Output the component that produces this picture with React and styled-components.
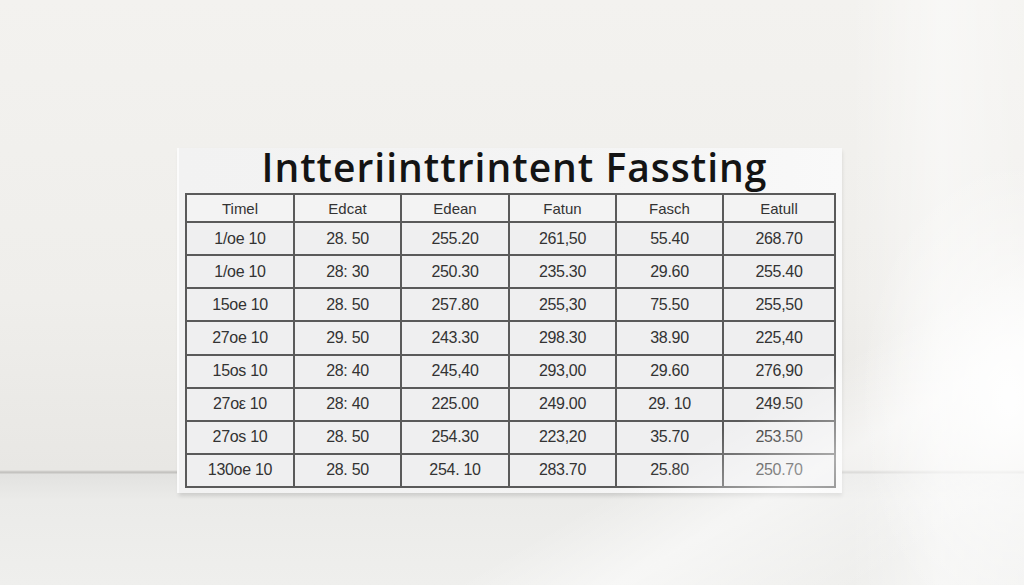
import React from 'react';
import styled, { createGlobalStyle } from 'styled-components';

const GlobalStyle = createGlobalStyle`
    html, body {
        margin:0;
        padding:0;
        background:#efeeeb;
    }
`

const Scene = styled.div`
    position:relative;
    width:1024px;
    height:585px;
    overflow:hidden;
    box-sizing:border-box;
    padding:148px 0 0 179px;
    background:
        linear-gradient(to bottom,
            #f3f2ef 0px,
            #efeeeb 300px,
            #e8e7e4 470px,
            #c4c3c0 472px,
            #c4c3c0 473px,
            #e2e2e0 474px,
            #ebebe9 500px,
            #efefed 585px);
    &::after{
        content:'';
        position:absolute;
        inset:0;
        pointer-events:none;
        background:
            radial-gradient(ellipse 150px 240px at 1010px 400px, rgba(255,255,255,0.95), rgba(255,255,255,0) 100%),
            linear-gradient(150deg, rgba(255,255,255,0) 72%, rgba(255,255,255,0.5) 80%, rgba(255,255,255,0) 92%),
            linear-gradient(to right, rgba(255,255,255,0) 83%, rgba(255,255,255,0.45) 92%, rgba(255,255,255,0.2) 100%);
    }
`

const Board = styled.div`
    width:663px;
    height:345px;
    box-sizing:border-box;
    padding:0 6px 5px 6px;
    display:flex;
    flex-direction:column;
    background:linear-gradient(to right, #f2f2f2, #f4f4f4 60%, #f9f9f9);
    box-shadow:-2px 0 0 #fbfbfb, 0 3px 4px rgba(0,0,0,0.12);
`

const Title = styled.h1`
    margin:0;
    height:45px;
    padding-left:8px;
    font-family:"Open Sans", "Liberation Sans", sans-serif;
    font-weight:600;
    font-size:39px;
    line-height:37px;
    letter-spacing:1px;
    text-align:center;
    color:#141414;
    white-space:nowrap;
`

const Grid = styled.div`
    display:grid;
    grid-template-columns:106px 105px 106px 105px 105px 1fr;
    grid-template-rows:26px repeat(8, 1fr);
    gap:2px;
    flex:1;
    border:2px solid #5a5a5a;
    background:#5a5a5a;
`

const Cell = styled.div`
    display:flex;
    align-items:center;
    justify-content:center;
    background:${props => props.head ? '#f3f3f3' : '#efeff0'};
    font-family:"Liberation Sans", Arial, sans-serif;
    font-size:${props => props.head ? '15px' : '16px'};
    color:#333;
    letter-spacing:${props => props.head ? '0' : '-0.3px'};
`

const headers = ['Timel', 'Edcat', 'Edean', 'Fatun', 'Fasch', 'Eatull']

const rows = [
    ['1/oe 10', '28. 50', '255.20', '261,50', '55.40', '268.70'],
    ['1/oe 10', '28: 30', '250.30', '235.30', '29.60', '255.40'],
    ['15oe 10', '28. 50', '257.80', '255,30', '75.50', '255,50'],
    ['27oe 10', '29. 50', '243.30', '298.30', '38.90', '225,40'],
    ['15os 10', '28: 40', '245,40', '293,00', '29.60', '276,90'],
    ['27oε 10', '28: 40', '225.00', '249.00', '29. 10', '249.50'],
    ['27os 10', '28. 50', '254.30', '223,20', '35.70', '253.50'],
    ['130oe 10', '28. 50', '254. 10', '283.70', '25.80', '250.70'],
]

export default function App() {
    return (
        <Scene>
            <GlobalStyle />
            <Board>
                <Title>Intteriinttrintent Fassting</Title>
                <Grid>
                    {headers.map((h, i) => <Cell head key={'h' + i}>{h}</Cell>)}
                    {rows.map((r, ri) => r.map((c, ci) => (
                        <Cell key={ri + '-' + ci}>{c}</Cell>
                    )))}
                </Grid>
            </Board>
        </Scene>
    )
}
